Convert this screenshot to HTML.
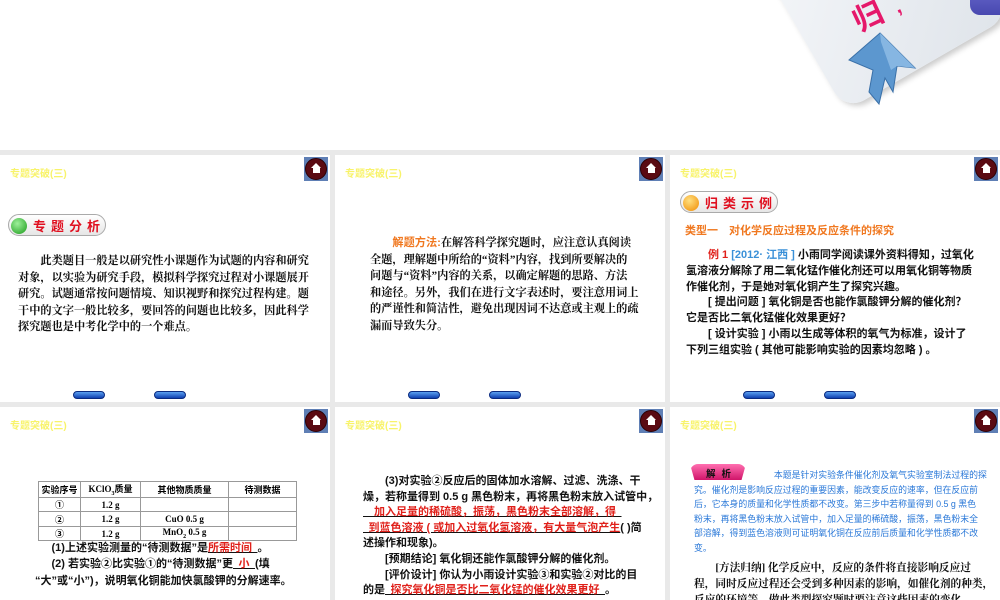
<!DOCTYPE html>
<html><head><meta charset="utf-8"><style>
*{margin:0;padding:0;box-sizing:border-box}
body{width:1000px;height:600px;overflow:hidden;background:#e9e9e9;position:relative;font-family:"Liberation Sans","Noto Sans CJK SC",sans-serif}
.top{position:absolute;left:0;top:0;width:1000px;height:150px;background:#fff;overflow:hidden}
.s{position:absolute;background:#fff;overflow:hidden}
.s div{white-space:nowrap}
.hd{position:absolute;left:10px;top:10px;font-size:10px;color:#f8f36a;font-weight:bold}
.home{position:absolute;top:2px;right:2px;width:24px;height:24px;background:#5f7fb5}
.home i{position:absolute;left:1px;top:1px;width:22px;height:22px;border-radius:50%;background:#5a0a12;border:1px solid #2a0006}
.home b{position:absolute;left:7px;top:6px;width:0;height:0;border-left:5px solid transparent;border-right:5px solid transparent;border-bottom:5px solid #fff}
.home u{position:absolute;left:8.5px;top:11px;width:7px;height:5px;background:#fff}
.nav{position:absolute;width:32px;height:8px;border-radius:4px;background:linear-gradient(#5aa0f0,#1040b0);border:1px solid #0a2a80}
.ln{position:absolute;white-space:nowrap;color:#111}
.serif{font-family:"Liberation Serif","Noto Serif CJK SC",serif}
.red{color:#e0201a}
.badge{position:absolute;height:22px;border-radius:11px;border:1px solid #aaa;background:linear-gradient(#fff,#e6e6e6)}
.badge .dot{position:absolute;left:2px;top:3px;width:16px;height:16px;border-radius:50%}
.badge span{position:absolute;left:24px;top:1px;font-size:13px;font-weight:bold;color:#e01020;letter-spacing:5px;white-space:nowrap}
table{border-collapse:collapse;font-size:9px;font-family:"Liberation Serif","Noto Sans CJK SC",serif;font-weight:bold}
td{border:1px solid #999;height:14.5px;text-align:center;padding:0}
.ul{text-decoration:underline;text-decoration-color:#111}
</style></head><body>
<div class="top">
  <div style="position:absolute;left:790px;top:-95px;width:190px;height:170px;border-radius:22px;background:linear-gradient(135deg,#f4f6f9,#dfe4ea);transform:rotate(-30deg);box-shadow:2px 4px 6px #ccc"></div>
  <div style="position:absolute;left:852px;top:-8px;font-size:30px;font-weight:bold;color:#e5186a;transform:rotate(-25deg)">归</div>
  <div style="position:absolute;left:895px;top:-4px;font-size:20px;font-weight:bold;color:#e5186a;transform:rotate(-25deg)">,</div>
  <div style="position:absolute;left:970px;top:-30px;width:50px;height:45px;border-radius:10px;background:linear-gradient(#7a7adc,#4848b0)"></div>
  <svg style="position:absolute;left:845px;top:30px" width="75" height="78" viewBox="0 0 75 78"><path d="M35 3 L70 38 L52 36 L48 62 L40 48 L34 74 L24 62 L28 40 L4 30 Z" fill="#5c97cf" stroke="#3a70a8"/><path d="M35 3 L70 38 L52 36 L46 40 L36 12 Z" fill="#86b6e2"/></svg>
</div>

<!-- slide 1 -->
<div class="s" style="left:0;top:155px;width:330px;height:247px">
  <div class="hd">专题突破(三)</div>
  <div class="home"><i></i><b></b><u></u></div>
  <div class="badge" style="left:8px;top:59px;width:98px"><div class="dot" style="background:radial-gradient(circle at 40% 35%,#9ef09a,#1a9a1a)"></div><span>专题分析</span></div>
  <div class="serif" style="position:absolute;left:18px;top:98px;font-size:11.2px;line-height:16.6px;font-weight:bold;color:#111">
    <div>&emsp;&emsp;此类题目一般是以研究性小课题作为试题的内容和研究</div>
    <div>对象，以实验为研究手段，模拟科学探究过程对小课题展开</div>
    <div>研究。试题通常按问题情境、知识视野和探究过程构建。题</div>
    <div>干中的文字一般比较多，要回答的问题也比较多，因此科学</div>
    <div>探究题也是中考化学中的一个难点。</div>
  </div>
  <div class="nav" style="left:73px;top:236px"></div><div class="nav" style="left:154px;top:236px"></div>
</div>

<!-- slide 2 -->
<div class="s" style="left:335px;top:155px;width:330px;height:247px">
  <div class="hd">专题突破(三)</div>
  <div class="home"><i></i><b></b><u></u></div>
  <div class="serif" style="position:absolute;left:35px;top:80px;font-size:11.2px;line-height:16.6px;font-weight:bold;color:#111">
    <div>&emsp;&emsp;<span style="color:#f07820;font-family:'Liberation Sans','Noto Sans CJK SC',sans-serif">解题方法:</span>在解答科学探究题时，应注意认真阅读</div>
    <div>全题，理解题中所给的“资料”内容，找到所要解决的</div>
    <div>问题与“资料”内容的关系，以确定解题的思路、方法</div>
    <div>和途径。另外，我们在进行文字表述时，要注意用词上</div>
    <div>的严谨性和简洁性，避免出现因词不达意或主观上的疏</div>
    <div>漏而导致失分。</div>
  </div>
  <div class="nav" style="left:73px;top:236px"></div><div class="nav" style="left:154px;top:236px"></div>
</div>

<!-- slide 3 -->
<div class="s" style="left:670px;top:155px;width:330px;height:247px">
  <div class="hd">专题突破(三)</div>
  <div class="home"><i></i><b></b><u></u></div>
  <div class="badge" style="left:10px;top:36px;width:98px"><div class="dot" style="background:radial-gradient(circle at 40% 35%,#ffe080,#f08a00)"></div><span>归类示例</span></div>
  <div class="ln" style="left:15px;top:67px;font-size:11px;font-weight:bold;color:#f07820">类型一&emsp;对化学反应过程及反应条件的探究</div>
  <div style="position:absolute;left:16px;top:93px;font-size:11px;line-height:15.8px;font-weight:bold;color:#111">
    <div>&emsp;&emsp;<span class="red">例 1</span> <span style="color:#3a90d8">[2012· 江西 ]</span> 小雨同学阅读课外资料得知，过氧化</div>
    <div>氢溶液分解除了用二氧化锰作催化剂还可以用氧化铜等物质</div>
    <div>作催化剂，于是她对氧化铜产生了探究兴趣。</div>
    <div>&emsp;&emsp;[ 提出问题 ] 氧化铜是否也能作氯酸钾分解的催化剂？</div>
    <div>它是否比二氧化锰催化效果更好？</div>
    <div>&emsp;&emsp;[ 设计实验 ] 小雨以生成等体积的氧气为标准，设计了</div>
    <div>下列三组实验 ( 其他可能影响实验的因素均忽略 ) 。</div>
  </div>
  <div class="nav" style="left:73px;top:236px"></div><div class="nav" style="left:154px;top:236px"></div>
</div>

<!-- slide 4 -->
<div class="s" style="left:0;top:407px;width:330px;height:193px">
  <div class="hd">专题突破(三)</div>
  <div class="home"><i></i><b></b><u></u></div>
  <table style="position:absolute;left:38px;top:74px;width:259px">
    <tr><td style="width:42px">实验序号</td><td style="width:60px">KClO<sub style="font-size:6px">3</sub>质量</td><td style="width:88px">其他物质质量</td><td>待测数据</td></tr>
    <tr><td>①</td><td>1.2 g</td><td></td><td></td></tr>
    <tr><td>②</td><td>1.2 g</td><td>CuO 0.5 g</td><td></td></tr>
    <tr><td>③</td><td>1.2 g</td><td>MnO<sub style="font-size:6px">2</sub> 0.5 g</td><td></td></tr>
  </table>
  <div style="position:absolute;left:35px;top:133px;font-size:11px;line-height:16.3px;font-weight:bold;color:#111">
    <div>&emsp;&ensp;(1)上述实验测量的“待测数据”是<span class="ul red">所需时间&ensp;</span>。</div>
    <div>&emsp;&ensp;(2) 若实验②比实验①的“待测数据”更<span class="ul red">&ensp;小&ensp;</span>(填</div>
    <div>“大”或“小”)，说明氧化铜能加快氯酸钾的分解速率。</div>
  </div>
</div>

<!-- slide 5 -->
<div class="s" style="left:335px;top:407px;width:330px;height:193px">
  <div class="hd">专题突破(三)</div>
  <div class="home"><i></i><b></b><u></u></div>
  <div style="position:absolute;left:28px;top:67px;font-size:11px;line-height:15.6px;font-weight:bold;color:#111">
    <div>&emsp;&emsp;(3)对实验②反应后的固体加水溶解、过滤、洗涤、干</div>
    <div>燥，若称量得到 0.5 g 黑色粉末，再将黑色粉末放入试管中，</div>
    <div><span class="ul red">&emsp;加入足量的稀硫酸，振荡，黑色粉末全部溶解，得&ensp;</span></div>
    <div><span class="ul red">&ensp;到蓝色溶液 ( 或加入过氧化氢溶液，有大量气泡产生</span>( )简</div>
    <div>述操作和现象)。</div>
    <div>&emsp;&emsp;[预期结论] 氧化铜还能作氯酸钾分解的催化剂。</div>
    <div>&emsp;&emsp;[评价设计] 你认为小雨设计实验③和实验②对比的目</div>
    <div>的是<span class="ul red">&ensp;探究氧化铜是否比二氧化锰的催化效果更好&ensp;</span>。</div>
  </div>
</div>

<!-- slide 6 -->
<div class="s" style="left:670px;top:407px;width:330px;height:193px">
  <div class="hd">专题突破(三)</div>
  <div class="home"><i></i><b></b><u></u></div>
  <div style="position:absolute;left:20px;top:57px;width:56px;height:16px;background:linear-gradient(#ff6fb0,#d0156a);border-radius:8px 8px 3px 3px;clip-path:polygon(0 0,100% 0,92% 100%,8% 100%)"></div>
  <div class="ln" style="left:36px;top:59px;font-size:9.5px;font-weight:bold;color:#111;letter-spacing:6px">解析</div>
  <div style="position:absolute;left:24px;top:61px;font-size:8.9px;line-height:14.5px;color:#2a78d8">
    <div>&emsp;&emsp;&emsp;&emsp;&emsp;&emsp;&emsp;&emsp;&emsp;本题是针对实验条件催化剂及氧气实验室制法过程的探</div>
    <div>究。催化剂是影响反应过程的重要因素，能改变反应的速率，但在反应前</div>
    <div>后，它本身的质量和化学性质都不改变。第三步中若称量得到 0.5 g 黑色</div>
    <div>粉末，再将黑色粉末放入试管中，加入足量的稀硫酸，振荡，黑色粉末全</div>
    <div>部溶解，得到蓝色溶液则可证明氧化铜在反应前后质量和化学性质都不改</div>
    <div>变。</div>
  </div>
  <div class="serif" style="position:absolute;left:24px;top:154px;font-size:10.7px;line-height:15.8px;font-weight:bold;color:#111">
    <div>&emsp;&emsp;[方法归纳] 化学反应中，反应的条件将直接影响反应过</div>
    <div>程，同时反应过程还会受到多种因素的影响，如催化剂的种类，</div>
    <div>反应的环境等。做此类型探究题时要注意这些因素的变化。</div>
  </div>
</div>
</body></html>
